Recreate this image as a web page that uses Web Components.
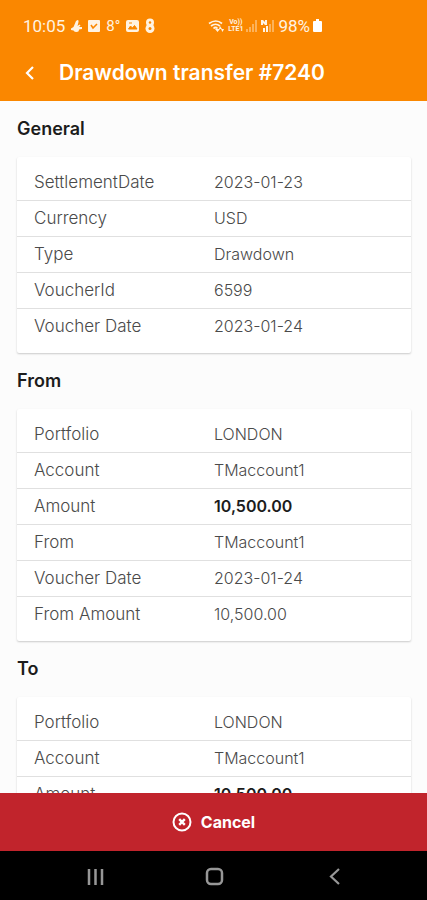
<!DOCTYPE html>
<html lang="en">
<head>
<meta charset="utf-8">
<meta name="viewport" content="width=device-width, initial-scale=1">
<title>Drawdown transfer #7240</title>
<style>
    body {
        margin: 0;
        font-family: Inter, "Liberation Sans", sans-serif;
        color: #4a4a4a;
        background: #fcfcfc;
    }
</style>
</head>
<body>
<transfer-screen>
    <status-bar slot="top"></status-bar>
    <title-bar slot="top">Drawdown transfer #7240</title-bar>

    <detail-section heading="General">
        <detail-row label="SettlementDate">2023-01-23</detail-row>
        <detail-row label="Currency">USD</detail-row>
        <detail-row label="Type">Drawdown</detail-row>
        <detail-row label="VoucherId">6599</detail-row>
        <detail-row label="Voucher Date">2023-01-24</detail-row>
    </detail-section>
    <detail-section heading="From">
        <detail-row label="Portfolio">LONDON</detail-row>
        <detail-row label="Account">TMaccount1</detail-row>
        <detail-row label="Amount" strong>10,500.00</detail-row>
        <detail-row label="From">TMaccount1</detail-row>
        <detail-row label="Voucher Date">2023-01-24</detail-row>
        <detail-row label="From Amount">10,500.00</detail-row>
    </detail-section>
    <detail-section heading="To">
        <detail-row label="Portfolio">LONDON</detail-row>
        <detail-row label="Account">TMaccount1</detail-row>
        <detail-row label="Amount" strong>10,500.00</detail-row>
    </detail-section>

    <cancel-button slot="bottom">Cancel</cancel-button>
    <nav-bar slot="bottom"></nav-bar>
</transfer-screen>

<script>
function attach(element, html) {
    const template = document.createElement('template');
    template.innerHTML = html;
    element.attachShadow({ mode: 'open' }).appendChild(template.content.cloneNode(true));
}

class TransferScreen extends HTMLElement {
    constructor() {
        super();
        attach(this, `
            <style>
                :host {
                    display: flex;
                    flex-direction: column;
                    height: 100vh;
                }
                main {
                    flex: 1;
                    min-height: 0;
                    overflow-y: auto;
                    scrollbar-width: none;
                    padding: 0 16px 16px 17px;
                }
            </style>
            <header><slot name="top"></slot></header>
            <main><slot></slot></main>
            <footer><slot name="bottom"></slot></footer>`);
    }
}

class StatusBar extends HTMLElement {
    constructor() {
        super();
        attach(this, `
            <style>
                :host {
                    display: flex;
                    justify-content: space-between;
                    height: 44px;
                    padding: 8px 105px 0 23px;
                    box-sizing: border-box;
                    background: #fa8700;
                    color: #fff3e2;
                    font: 17px/36px Roboto, sans-serif;
                }
                div {
                    display: flex;
                    align-items: center;
                }
                .left {
                    gap: 6px;
                }
                .right {
                    gap: 3px;
                }
                svg {
                    display: block;
                    fill: currentColor;
                }
                .degrees {
                    font-size: 15px;
                }
                .volte {
                    font: bold 7px/7px Roboto, sans-serif;
                    text-align: center;
                }
                .volte span {
                    display: block;
                }
            </style>
            <div class="left">
                <span>10:05</span>
                <svg width="11" height="14" viewBox="0 0 11 14">
                    <path d="M6.500 1q1.500 0 1 2L6.500 7l2-1.500 1 1-1.500 1.500 3 0v2l-3 .5q0 2.500-2.500 2.500-2 0-3-1.500L0 11V9.500L2.500 8 5 2z"/>
                </svg>
                <svg width="12" height="14" viewBox="0 0 12 14">
                    <rect y="1" width="12" height="12" rx="1"/>
                    <path d="M3 6l2 3 4-4" fill="none" stroke="#fa8700" stroke-width="1.6"/>
                </svg>
                <span class="degrees">8°</span>
                <svg width="13" height="14" viewBox="0 0 13 14">
                    <rect y="1" width="13" height="12" rx="2"/>
                    <path d="M2.500 10l2-3 2 2 2-2.500 2.500 3.500zM3 4h3" fill="#fa8700" stroke="#fa8700"/>
                </svg>
                <svg width="10" height="16" viewBox="0 0 10 16">
                    <circle cx="5" cy="4.500" r="4"/>
                    <circle cx="5" cy="10.500" r="4.500"/>
                    <circle cx="5" cy="4.500" r="1.200" fill="#fa8700"/>
                    <circle cx="5" cy="10.500" r="1.500" fill="#fa8700"/>
                </svg>
            </div>
            <div class="right">
                <svg width="17" height="14" viewBox="0 0 17 14">
                    <path d="M1 4.500q7-5 13 0M3 7q4.500-3.500 9 0M5.500 9.500q2-2 4 0" fill="none" stroke="currentColor" stroke-width="1.7"/>
                    <path d="M7 10l5 0-2.500 3zM12 7l2 3h-3zM13 10h3l-1.500 3z"/>
                </svg>
                <div class="volte"><p><span>Vo))</span><span>LTE1</span></p></div>
                <svg width="12" height="14" viewBox="0 0 12 14">
                    <path d="M0 10h2v3H0zM3 8h2v5H3zM6 5h2v8H6zM9 1h2v12H9z" opacity=".4"/>
                </svg>
                <svg width="14" height="14" viewBox="0 0 14 14">
                    <path d="M0 1h2l2 2V1h2v5H4L2 4v2H0z"/>
                    <path d="M2 9h2v4H2zM5 7h2v6H5z"/>
                    <path d="M8 5h2v8H8zM11 1h2v12h-2z" opacity=".4"/>
                </svg>
                <span>98%</span>
                <svg width="9" height="14" viewBox="0 0 9 14">
                    <path d="M3 0h3v2h2q1 0 1 1v9q0 1-1 1H1q-1 0-1-1V3q0-1 1-1h2z" fill="#fff"/>
                </svg>
            </div>`);
    }
}

class TitleBar extends HTMLElement {
    constructor() {
        super();
        attach(this, `
            <style>
                :host {
                    display: flex;
                    align-items: center;
                    height: 57px;
                    padding: 0 17px;
                    background: #fa8700;
                    color: #fff;
                }
                button {
                    width: 24px;
                    height: 24px;
                    margin: 0 18px 0 0;
                    padding: 0;
                    border: 0;
                    background: none;
                    color: inherit;
                }
                svg {
                    display: block;
                }
                h1 {
                    margin: 0;
                    font-size: 21px;
                    line-height: 28px;
                    font-weight: 600;
                    white-space: nowrap;
                }
            </style>
            <button type="button" aria-label="Back">
                <svg width="24" height="24" viewBox="0 0 24 24">
                    <path d="M16 6l-6 6 6 6" fill="none" stroke="currentColor" stroke-width="2.200"/>
                </svg>
            </button>
            <h1><slot></slot></h1>`);
    }
}

class DetailSection extends HTMLElement {
    constructor() {
        super();
        attach(this, `
            <style>
                :host {
                    display: block;
                }
                h2 {
                    margin: 0;
                    font-size: 18px;
                    line-height: 56px;
                    font-weight: 600;
                    color: #1c1c1c;
                }
                .card {
                    padding: 8px 0;
                    background: #fff;
                    border-radius: 2px;
                    box-shadow: 0 1px 2px rgba(0, 0, 0, 0.2);
                }
            </style>
            <section>
                <h2></h2>
                <div class="card"><slot></slot></div>
            </section>`);
    }

    connectedCallback() {
        this.shadowRoot.querySelector('h2').textContent = this.getAttribute('heading');
    }
}

class DetailRow extends HTMLElement {
    constructor() {
        super();
        attach(this, `
            <style>
                :host {
                    display: block;
                    border-bottom: 1px solid #e0e0e0;
                }
                :host(:last-child) {
                    border-bottom-color: transparent;
                }
                dl {
                    display: grid;
                    grid-template-columns: 1fr 1fr;
                    margin: 0;
                    padding: 0 17px;
                    font-size: 16px;
                    line-height: 35px;
                    font-weight: 300;
                }
                dt {
                    font-size: 17px;
                }
                dd {
                    margin: 0;
                }
                :host([strong]) dd {
                    font-weight: 600;
                    color: #1c1c1c;
                }
            </style>
            <dl>
                <dt></dt>
                <dd><slot></slot></dd>
            </dl>`);
    }

    connectedCallback() {
        this.shadowRoot.querySelector('dt').textContent = this.getAttribute('label');
    }
}

class CancelButton extends HTMLElement {
    constructor() {
        super();
        attach(this, `
            <style>
                :host {
                    display: block;
                }
                button {
                    display: flex;
                    align-items: center;
                    justify-content: center;
                    gap: 9px;
                    width: 100%;
                    height: 58px;
                    padding: 0;
                    border: 0;
                    background: #c1242c;
                    color: #fff;
                    font: 700 16px/24px Inter, "Liberation Sans", sans-serif;
                }
            </style>
            <button type="button">
                <svg width="20" height="20" viewBox="0 0 20 20" fill="none" stroke="currentColor">
                    <circle cx="10" cy="10" r="8.500" stroke-width="2"/>
                    <path d="M7.200 7.200l5.600 5.600M12.800 7.200l-5.600 5.600" stroke-width="2.400"/>
                </svg>
                <slot></slot>
            </button>`);
    }
}

class NavBar extends HTMLElement {
    constructor() {
        super();
        attach(this, `
            <style>
                :host {
                    display: block;
                    background: #000;
                    color: #979797;
                }
                nav {
                    display: flex;
                    justify-content: center;
                    align-items: center;
                    gap: 96px;
                    height: 49px;
                }
                button {
                    padding: 0;
                    border: 0;
                    background: none;
                    color: inherit;
                }
                svg {
                    display: block;
                    fill: none;
                    stroke: currentColor;
                }
            </style>
            <nav>
                <button type="button" aria-label="Recent apps">
                    <svg width="24" height="24" viewBox="0 0 24 24">
                        <path d="M7 5v16M13.500 5v16M20 5v16" stroke-width="2.500"/>
                    </svg>
                </button>
                <button type="button" aria-label="Home">
                    <svg width="24" height="24" viewBox="0 0 24 24">
                        <rect x="5" y="5" width="15" height="15" rx="4" stroke-width="2.500"/>
                    </svg>
                </button>
                <button type="button" aria-label="Back">
                    <svg width="24" height="24" viewBox="0 0 24 24">
                        <path d="M17 5l-8 7.500 8 7.500" stroke-width="2.200"/>
                    </svg>
                </button>
            </nav>`);
    }
}

customElements.define('transfer-screen', TransferScreen);
customElements.define('status-bar', StatusBar);
customElements.define('title-bar', TitleBar);
customElements.define('detail-section', DetailSection);
customElements.define('detail-row', DetailRow);
customElements.define('cancel-button', CancelButton);
customElements.define('nav-bar', NavBar);
</script>
</body>
</html>
